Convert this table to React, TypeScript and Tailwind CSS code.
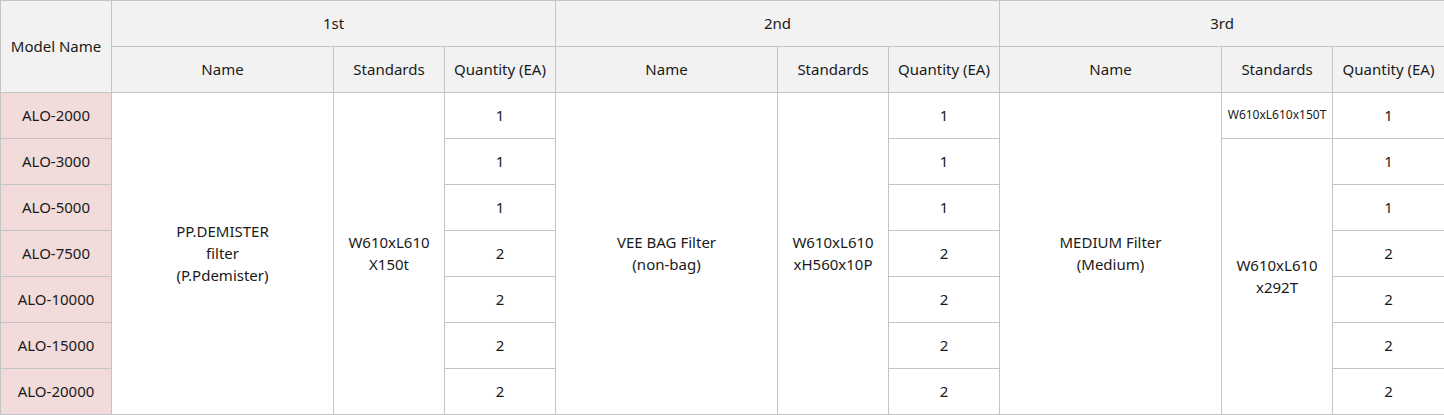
import React from "react";

const cell = "border border-[#c4c4c4] text-center align-middle p-0 pb-[2px]";
const head = `${cell} bg-[#f2f2f2]`;
const model = `${cell} bg-[#f2dcdb]`;

const rows = [
  { m: "ALO-2000", q: ["1", "1", "1"] },
  { m: "ALO-3000", q: ["1", "1", "1"] },
  { m: "ALO-5000", q: ["1", "1", "1"] },
  { m: "ALO-7500", q: ["2", "2", "2"] },
  { m: "ALO-10000", q: ["2", "2", "2"] },
  { m: "ALO-15000", q: ["2", "2", "2"] },
  { m: "ALO-20000", q: ["2", "2", "2"] },
];

export default function App() {
  return (
    <div className="w-[1444px] h-[415px] bg-white font-['Noto_Sans','Open_Sans',sans-serif] text-[15px] leading-[22px] text-[#1a1a1a]">
      <table className="w-[1444px] table-fixed border-collapse">
        <colgroup>
          <col className="w-[111px]" />
          <col className="w-[222px]" />
          <col className="w-[111px]" />
          <col className="w-[111px]" />
          <col className="w-[222px]" />
          <col className="w-[111px]" />
          <col className="w-[111px]" />
          <col className="w-[222px]" />
          <col className="w-[111px]" />
          <col className="w-[112px]" />
        </colgroup>
        <thead>
          <tr className="h-[46px]">
            <th rowSpan={2} className={`${head} font-normal`}>Model Name</th>
            <th colSpan={3} className={`${head} font-normal`}>1st</th>
            <th colSpan={3} className={`${head} font-normal`}>2nd</th>
            <th colSpan={3} className={`${head} font-normal`}>3rd</th>
          </tr>
          <tr className="h-[46px]">
            <th className={`${head} font-normal`}>Name</th>
            <th className={`${head} font-normal`}>Standards</th>
            <th className={`${head} font-normal`}>Quantity (EA)</th>
            <th className={`${head} font-normal`}>Name</th>
            <th className={`${head} font-normal`}>Standards</th>
            <th className={`${head} font-normal`}>Quantity (EA)</th>
            <th className={`${head} font-normal`}>Name</th>
            <th className={`${head} font-normal`}>Standards</th>
            <th className={`${head} font-normal`}>Quantity (EA)</th>
          </tr>
        </thead>
        <tbody>
          {rows.map((r, i) => (
            <tr key={r.m} className="h-[46px]">
              <td className={model}>{r.m}</td>
              {i === 0 && (
                <>
                  <td rowSpan={7} className={cell}>
                    PP.DEMISTER
                    <br />
                    filter
                    <br />
                    (P.Pdemister)
                  </td>
                  <td rowSpan={7} className={cell}>
                    W610xL610
                    <br />
                    X150t
                  </td>
                </>
              )}
              <td className={cell}>{r.q[0]}</td>
              {i === 0 && (
                <>
                  <td rowSpan={7} className={cell}>
                    VEE BAG Filter
                    <br />
                    (non-bag)
                  </td>
                  <td rowSpan={7} className={cell}>
                    W610xL610
                    <br />
                    xH560x10P
                  </td>
                </>
              )}
              <td className={cell}>{r.q[1]}</td>
              {i === 0 && (
                <td rowSpan={7} className={cell}>
                  MEDIUM Filter
                  <br />
                  (Medium)
                </td>
              )}
              {i === 0 && <td className={`${cell} text-[12px]`}>W610xL610x150T</td>}
              {i === 1 && (
                <td rowSpan={6} className={cell}>
                  W610xL610
                  <br />
                  x292T
                </td>
              )}
              <td className={cell}>{r.q[2]}</td>
            </tr>
          ))}
        </tbody>
      </table>
    </div>
  );
}
